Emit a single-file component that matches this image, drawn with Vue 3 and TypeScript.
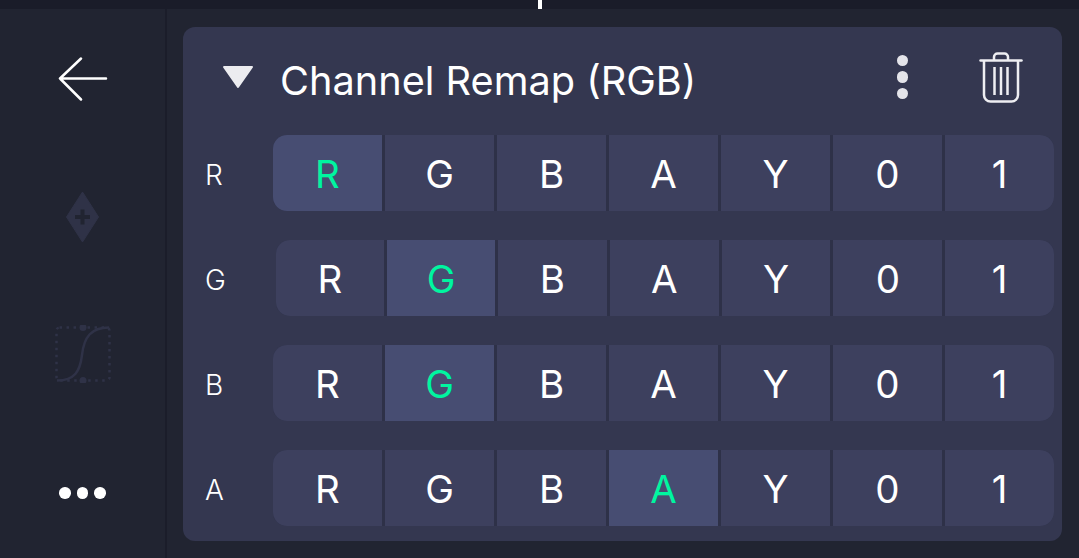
<script setup lang="ts">
interface Row {
  label: string
  active: string
  indent?: boolean
}

const options = ['R', 'G', 'B', 'A', 'Y', '0', '1']

const rows: Row[] = [
  { label: 'R', active: 'R' },
  { label: 'G', active: 'G', indent: true },
  { label: 'B', active: 'G' },
  { label: 'A', active: 'A' },
]
</script>

<template>
  <div class="screen">
    <div class="topbar"><span class="tick" /></div>
    <div class="body">
      <aside class="sidebar">
        <svg class="icon-back" width="50" height="44" viewBox="0 0 50 44" fill="none" stroke="#fff" stroke-width="2.500" stroke-linecap="round" stroke-linejoin="round">
          <path d="M2 21.500H48M23 1.500 2 21.500 23 42.500" />
        </svg>
        <svg class="icon-key" width="36" height="52" viewBox="0 0 36 52">
          <path d="M17.500 1 33.500 26 17.500 51 1.500 26Z" fill="#2f3247" stroke="#2f3247" stroke-width="1" stroke-linejoin="round" />
          <path d="M17.500 18.500V33.500M10 26H25" stroke="#212431" stroke-width="4" />
        </svg>
        <svg class="icon-curve" width="56" height="58" viewBox="0 0 56 58" fill="none" stroke="#2f3247">
          <rect x="1.500" y="2.500" width="53" height="53" rx="3" stroke-width="2.500" stroke-dasharray="2.500 4.500" />
          <path d="M2 55.500C20 55.500 25 46 27 30 29 12 36 2.500 54 2.500" stroke-width="2.500" />
          <circle cx="28" cy="2.500" r="3.500" fill="#2f3247" stroke="none" />
          <circle cx="28" cy="55.500" r="3.500" fill="#2f3247" stroke="none" />
        </svg>
        <div class="dots"><span /><span /><span /></div>
      </aside>

      <main class="content">
        <section class="panel">
          <header class="panel-head">
            <svg class="caret" width="32" height="24" viewBox="0 0 32 24">
              <path d="M2 2H30L16 22Z" fill="#ececf0" stroke="#ececf0" stroke-width="2" stroke-linejoin="round" />
            </svg>
            <h1 class="title">Channel Remap (RGB)</h1>
            <div class="kebab"><span /><span /><span /></div>
            <svg class="trash" width="44" height="52" viewBox="0 0 44 52" fill="none" stroke="#eeeef2" stroke-width="2.500">
              <path d="M1.500 8.500H42.500" stroke-linecap="round" />
              <path d="M15 8V5A3.500 3.500 0 0 1 18.500 1.500H25.500A3.500 3.500 0 0 1 29 5V8" />
              <path d="M5 9V43A6.500 6.500 0 0 0 11.500 49.500H32.500A6.500 6.500 0 0 0 39 43V9" />
              <path d="M15.500 15V43M22 15V43M28.500 15V43" />
            </svg>
          </header>

          <div class="rows">
            <div v-for="row in rows" :key="row.label" class="row" :class="{ indent: row.indent }">
              <span class="row-label">{{ row.label }}</span>
              <div class="segments">
                <button
                  v-for="opt in options"
                  :key="opt"
                  class="segment"
                  :class="{ active: opt === row.active }"
                >
                  {{ opt }}
                </button>
              </div>
            </div>
          </div>
        </section>
      </main>
    </div>
  </div>
</template>

<style>
html,
body {
  margin: 0;
  background: #212431;
}
</style>

<style scoped>
.screen {
  display: flex;
  flex-direction: column;
  width: 1079px;
  height: 558px;
  overflow: hidden;
  background: #212431;
  font-family: Inter, "Liberation Sans", sans-serif;
  color: #fff;
}

.topbar {
  position: relative;
  flex: 0 0 9px;
  background: #1a1c29;
}

.tick {
  position: absolute;
  top: 0;
  left: 538px;
  width: 4px;
  height: 9px;
  background: #fff;
}

.body {
  flex: 1;
  display: flex;
  min-height: 0;
}

.sidebar {
  flex: 0 0 165px;
  display: flex;
  flex-direction: column;
  align-items: center;
  border-right: 2px solid #1b1d2a;
  box-sizing: content-box;
}

.icon-back {
  margin-top: 48px;
}

.icon-key {
  margin-top: 90px;
}

.icon-curve {
  margin-top: 82px;
}

.dots {
  display: flex;
  gap: 6px;
  margin-top: 104px;
}

.dots span {
  width: 11.5px;
  height: 11.5px;
  border-radius: 50%;
  background: #fff;
}

.content {
  flex: 1;
  min-width: 0;
  padding: 18px 17px 17px 16px;
}

.panel {
  height: 100%;
  box-sizing: border-box;
  background: #343750;
  border-radius: 12px;
}

.panel-head {
  display: flex;
  align-items: center;
  height: 108px;
  padding-left: 39px;
}

.caret {
  margin-top: -8px;
}

.title {
  flex: 1;
  margin: 2px 0 0 26px;
  font-size: 39.7px;
  font-weight: 400;
  line-height: 1;
}

.kebab {
  display: flex;
  flex-direction: column;
  gap: 5px;
  margin-right: 71px;
  margin-top: -8px;
}

.kebab span {
  width: 11.5px;
  height: 11.5px;
  border-radius: 50%;
  background: #e4e4ea;
}

.trash {
  margin-right: 39px;
  margin-top: -6px;
}

.rows {
  display: flex;
  flex-direction: column;
  gap: 29px;
  padding-right: 8px;
}

.row {
  display: flex;
  align-items: center;
  height: 76px;
}

.row-label {
  flex: 0 0 90px;
  box-sizing: border-box;
  padding: 3px 0 0 22px;
  font-size: 28px;
  font-weight: 300;
  line-height: 1;
}

.row.indent .row-label {
  flex-basis: 93px;
}

.segments {
  flex: 1;
  display: flex;
  gap: 3px;
  height: 100%;
  border-radius: 14px;
  overflow: hidden;
  background: #2e3148;
}

.segment {
  flex: 1 1 0;
  min-width: 0;
  padding: 3px 0 0;
  border: 0;
  background: #3d405e;
  color: #fff;
  font: inherit;
  font-size: 38.5px;
  font-weight: 400;
  line-height: 1;
}

.row.indent .segment:nth-child(-n + 2) {
  flex: 0 0 108px;
}

.segment.active {
  background: #474d72;
  color: #00f5a0;
}
</style>
